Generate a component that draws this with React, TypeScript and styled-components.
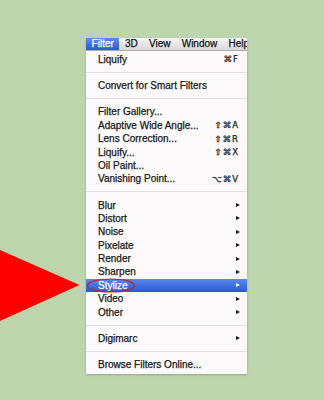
import React from "react";
import styled, { createGlobalStyle } from "styled-components";

const Global = createGlobalStyle`
  html, body { margin: 0; padding: 0; background: #bdd5ad; }
  body { width: 324px; height: 400px; overflow: hidden; font-family: "Liberation Sans", Arial, sans-serif; }
`;

const Page = styled.div`
  position: relative;
  width: 324px;
  height: 400px;
  box-sizing: border-box;
  padding: 38px 0 0 86px;
  background: #bdd5ad;
`;

const Menu = styled.div`
  width: 161px;
  display: flex;
  flex-direction: column;
  background: #fbf9f9;
  box-shadow: 0 1px 2px rgba(0, 0, 0, 0.22);
`;

const MenuBar = styled.div`
  height: 13px;
  box-sizing: border-box;
  display: flex;
  align-items: stretch;
  overflow: hidden;
  white-space: nowrap;
  background: linear-gradient(#f4f4f4, #d8d8d8);
  border-bottom: 1px solid #acacac;
`;

const BarItem = styled.div<{ $active?: boolean }>`
  flex-shrink: 0;
  padding: 0 5.6px;
  font-size: 10px;
  line-height: 12px;
  -webkit-text-stroke: 0.25px currentColor;
  color: ${(p) => (p.$active ? "#ffffff" : "#151515")};
  background: ${(p) => (p.$active ? "linear-gradient(#5d8aef, #2b59d7)" : "transparent")};
`;

const List = styled.div`
  display: flex;
  flex-direction: column;
  padding: 1.8px 0 2.6px;
`;

const Row = styled.div<{ $active?: boolean }>`
  position: relative;
  height: 13.4px;
  display: flex;
  align-items: center;
  padding: 0 6px 0 12px;
  font-size: 10px;
  -webkit-text-stroke: 0.25px currentColor;
  color: ${(p) => (p.$active ? "#ffffff" : "#181818")};
  background: ${(p) => (p.$active ? "linear-gradient(#5b88ee, #2a58d6)" : "transparent")};
`;

const Label = styled.span`
  flex: 1;
  white-space: nowrap;
`;

const Shortcut = styled.span`
  margin-right: 2px;
  font-family: "DejaVu Sans", sans-serif;
  font-size: 8.5px;
  letter-spacing: 1px;
  white-space: nowrap;
  color: #222222;
`;

const SubArrow = styled.span`
  width: 0;
  height: 0;
  border-left: 4px solid currentColor;
  border-top: 2.5px solid transparent;
  border-bottom: 2.5px solid transparent;
  margin-right: 1px;
`;

const Separator = styled.div`
  height: 12.8px;
  display: flex;
  align-items: center;
  &::after {
    content: "";
    flex: 1;
    height: 1px;
    background: #e3dfdf;
  }
`;

const Circle = styled.svg`
  position: absolute;
  left: 0;
  top: -2px;
  overflow: visible;
`;

const Pointer = styled.svg`
  position: absolute;
  left: 0;
  top: 249px;
`;

type Item =
  | { kind: "sep" }
  | { kind: "item"; label: string; shortcut?: string; sub?: boolean; active?: boolean };

const items: Item[] = [
  { kind: "item", label: "Liquify", shortcut: "⌘F" },
  { kind: "sep" },
  { kind: "item", label: "Convert for Smart Filters" },
  { kind: "sep" },
  { kind: "item", label: "Filter Gallery..." },
  { kind: "item", label: "Adaptive Wide Angle...", shortcut: "⇧⌘A" },
  { kind: "item", label: "Lens Correction...", shortcut: "⇧⌘R" },
  { kind: "item", label: "Liquify...", shortcut: "⇧⌘X" },
  { kind: "item", label: "Oil Paint..." },
  { kind: "item", label: "Vanishing Point...", shortcut: "⌥⌘V" },
  { kind: "sep" },
  { kind: "item", label: "Blur", sub: true },
  { kind: "item", label: "Distort", sub: true },
  { kind: "item", label: "Noise", sub: true },
  { kind: "item", label: "Pixelate", sub: true },
  { kind: "item", label: "Render", sub: true },
  { kind: "item", label: "Sharpen", sub: true },
  { kind: "item", label: "Stylize", sub: true, active: true },
  { kind: "item", label: "Video", sub: true },
  { kind: "item", label: "Other", sub: true },
  { kind: "sep" },
  { kind: "item", label: "Digimarc", sub: true },
  { kind: "sep" },
  { kind: "item", label: "Browse Filters Online..." },
];

const bar = ["Filter", "3D", "View", "Window", "Help"];

export default function App() {
  return (
    <Page>
      <Global />
      <Menu>
        <MenuBar>
          {bar.map((b, i) => (
            <BarItem key={b} $active={i === 0}>
              {b}
            </BarItem>
          ))}
        </MenuBar>
        <List>
          {items.map((it, i) =>
            it.kind === "sep" ? (
              <Separator key={i} />
            ) : (
              <Row key={i} $active={it.active}>
                <Label>{it.label}</Label>
                {it.shortcut && <Shortcut>{it.shortcut}</Shortcut>}
                {it.sub && <SubArrow />}
                {it.active && (
                  <Circle width="50" height="16" viewBox="0 0 50 16">
                    <ellipse cx="25" cy="8.5" rx="23.5" ry="6.5" fill="none" stroke="#b3262b" strokeWidth="1.1" />
                  </Circle>
                )}
              </Row>
            )
          )}
        </List>
      </Menu>
      <Pointer width="82" height="74" viewBox="0 0 82 74">
        <polygon points="0,1 0,72 79.5,36" fill="#ff0000" />
      </Pointer>
    </Page>
  );
}
